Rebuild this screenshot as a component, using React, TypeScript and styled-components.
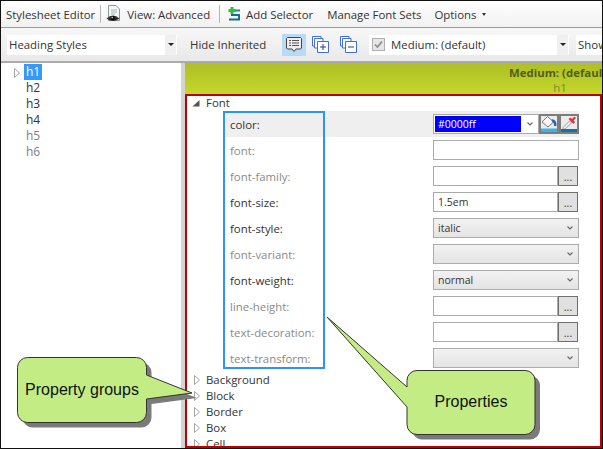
import styled, { createGlobalStyle } from 'styled-components';

const GlobalStyle = createGlobalStyle`
  html, body {
    margin: 0;
    padding: 0;
    background: #fff;
  }
`;

const Root = styled.div`
  position: relative;
  box-sizing: border-box;
  width: 603px;
  height: 449px;
  border: 1px solid #111;
  display: flex;
  flex-direction: column;
  overflow: hidden;
  font-family: 'Open Sans', 'Noto Sans', sans-serif;
  font-size: 11.4px;
  color: #333;
  background: #fff;
`;

const TopBar = styled.div`
  flex: none;
  box-sizing: border-box;
  height: 27px;
  display: flex;
  align-items: center;
  padding-left: 5px;
  white-space: nowrap;
  background: linear-gradient(#fff, #f1f1f1);
  border-bottom: 1px solid #9c9c9c;
`;

const Separator = styled.div<{ $before: number; $after: number }>`
  width: 1px;
  height: 18px;
  background: #b5b5b5;
  margin: 0 ${p => p.$after}px 0 ${p => p.$before}px;
`;

const ToolLabel = styled.span<{ $left?: number }>`
  margin-left: ${p => p.$left ?? 0}px;
`;

const Caret = styled.span`
  width: 0;
  height: 0;
  margin-left: 6px;
  border: 2.5px solid transparent;
  border-top: 3px solid #333;
  border-bottom: 0;
`;

const FilterBar = styled.div`
  flex: none;
  box-sizing: border-box;
  height: 35px;
  display: flex;
  align-items: center;
  padding-left: 6px;
  white-space: nowrap;
  background: linear-gradient(#f7f7f7, #e9e9e9);
  border-bottom: 2px solid #ababab;
`;

const Combo = styled.div<{ $width: number; $left?: number }>`
  box-sizing: border-box;
  width: ${p => p.$width}px;
  height: 20px;
  margin-left: ${p => p.$left ?? 0}px;
  display: flex;
  align-items: center;
  padding-left: 2px;
  flex: none;
  background: #fff;
`;

const ComboText = styled.span`
  flex: 1;
`;

const ComboArrow = styled.span`
  align-self: stretch;
  width: 11px;
  margin-right: 1px;
  display: flex;
  align-items: center;
  justify-content: center;
  background: #f0f0f0;

  &::before {
    content: '';
    border: 3px solid transparent;
    border-top: 3px solid #222;
    border-bottom: 0;
  }
`;

const CheckBox = styled.span`
  box-sizing: border-box;
  width: 13px;
  height: 13px;
  margin: 0 6px 0 1px;
  border: 1px solid #b0b0b0;
  background: #e6e6e6;
  display: flex;
  align-items: center;
  justify-content: center;
`;

const IconToggle = styled.div<{ $active?: boolean; $left: number }>`
  flex: none;
  width: 24px;
  height: 22px;
  margin-left: ${p => p.$left}px;
  display: flex;
  align-items: center;
  justify-content: center;
  background: ${p => (p.$active ? '#b9d9f6' : 'transparent')};
`;

const Body = styled.div`
  flex: 1;
  min-height: 0;
  display: flex;
`;

const Tree = styled.div`
  flex: none;
  width: 180px;
  padding-top: 1px;
`;

const TreeRow = styled.div<{ $muted?: boolean }>`
  height: 16px;
  display: flex;
  align-items: center;
  padding-left: 23px;
  line-height: 16px;
  font-size: 12px;
  color: ${p => (p.$muted ? '#808080' : '#333')};
  position: relative;
`;

const TreeCaret = styled.span`
  position: absolute;
  left: 13px;
  top: 4px;
  display: flex;
`;

const TreeLabel = styled.span<{ $selected?: boolean }>`
  padding: 0 2px;
  color: ${p => (p.$selected ? '#fff' : 'inherit')};
  background: ${p => (p.$selected ? '#3399ff' : 'transparent')};
`;

const Splitter = styled.div`
  flex: none;
  width: 4px;
  background: #d3d3d3;
`;

const Panel = styled.div`
  flex: 1;
  min-width: 0;
  display: flex;
  flex-direction: column;
  overflow: hidden;
`;

const Band = styled.div`
  flex: none;
  box-sizing: border-box;
  width: 750px;
  height: 32px;
  padding-top: 2px;
  display: flex;
  flex-direction: column;
  align-items: center;
  line-height: 15px;
  color: #7c8a2a;
  background: linear-gradient(#aebe26, #c4d92b);
`;

const BandTitle = styled.div`
  font-weight: 700;
  color: #535f17;
`;

const GroupRow = styled.div`
  flex: none;
  height: 16px;
  display: flex;
  align-items: center;
  padding-left: 7px;
  gap: 6px;
  line-height: 16px;
`;

const GroupCaret = styled.span`
  display: flex;
  width: 8px;
  justify-content: flex-end;
`;

const PropList = styled.div`
  flex: none;
  padding-left: 39px;
  padding-bottom: 1px;
`;

const PropRow = styled.div<{ $active?: boolean }>`
  width: 355px;
  height: 26px;
  display: grid;
  grid-template-columns: 209px 146px;
  align-items: center;
  background: ${p => (p.$active ? '#efefef' : 'transparent')};
`;

const PropName = styled.span<{ $set?: boolean }>`
  padding-left: 6px;
  color: ${p => (p.$set ? '#333' : '#8a8a8a')};
`;

const ValueWrap = styled.div`
  display: flex;
  height: 20px;
`;

const TextField = styled.div`
  box-sizing: border-box;
  flex: 1;
  height: 20px;
  padding-left: 4px;
  display: flex;
  align-items: center;
  font-size: 10.5px;
  background: #fff;
  border: 1px solid #ababab;
`;

const EllipsisButton = styled.div`
  box-sizing: border-box;
  flex: none;
  width: 20px;
  height: 20px;
  margin-right: 1px;
  padding-top: 3px;
  text-align: center;
  font-size: 10.5px;
  line-height: 14px;
  background: #e0e0e0;
  border: 1px solid #6f6f6f;
`;

const SelectField = styled.div`
  box-sizing: border-box;
  flex: 1;
  height: 20px;
  padding: 0 5px 0 4px;
  display: flex;
  align-items: center;
  justify-content: space-between;
  font-size: 10.5px;
  background: linear-gradient(#f2f2f2, #e4e4e4);
  border: 1px solid #acacac;
`;

const ColorCombo = styled.div`
  box-sizing: border-box;
  flex: 1;
  height: 20px;
  padding: 1px 5px 1px 1px;
  display: flex;
  align-items: center;
  justify-content: space-between;
  background: #fff;
  border: 1px solid #ababab;
`;

const ColorValue = styled.span`
  width: 86px;
  height: 16px;
  padding-left: 3px;
  box-sizing: border-box;
  line-height: 16px;
  font-size: 10.5px;
  color: #fff;
  background: #0000ff;
`;

const ColorButton = styled.div`
  box-sizing: border-box;
  flex: none;
  width: 20px;
  height: 20px;
  display: flex;
  background: #ececec;
  border: 2px solid #7d7d7d;
`;

const RedFrame = styled.div`
  position: absolute;
  left: 184px;
  top: 93px;
  right: 0;
  bottom: 0;
  border: 2px solid #c00000;
  pointer-events: none;
`;

const BlueFrame = styled.div`
  position: absolute;
  left: 222px;
  top: 110px;
  width: 102px;
  height: 258px;
  box-sizing: border-box;
  border: 2px solid #2a95f5;
  pointer-events: none;
`;

const Callout = styled.div<{ $left: number; $top: number; $w: number; $h: number }>`
  position: absolute;
  left: ${p => p.$left}px;
  top: ${p => p.$top}px;
  width: ${p => p.$w}px;
  height: ${p => p.$h}px;

  svg {
    position: absolute;
    inset: 0;
  }
`;

const CalloutText = styled.div<{ $left: number; $top: number; $w: number; $h: number }>`
  position: absolute;
  left: ${p => p.$left}px;
  top: ${p => p.$top}px;
  width: ${p => p.$w}px;
  height: ${p => p.$h}px;
  display: flex;
  align-items: center;
  justify-content: center;
  font-family: 'Liberation Sans', Arial, sans-serif;
  font-size: 16px;
  color: #111;
`;

const OpenCaret = () => (
  <svg width="8" height="7" viewBox="0 0 8 7">
    <path d="M7.5 0V6.5H0.5Z" fill="#555" />
  </svg>
);

const ClosedCaret = () => (
  <svg width="6" height="10" viewBox="0 0 6 10">
    <path d="M0.5 0.5L5.5 5L0.5 9.5Z" fill="#fff" stroke="#a6a6a6" />
  </svg>
);

const Chevron = () => (
  <svg width="6" height="4" viewBox="0 0 6 4">
    <path d="M0.5 0.5L3 3L5.5 0.5" fill="none" stroke="#666" strokeWidth="1.1" />
  </svg>
);

const ViewIcon = () => (
  <svg width="15" height="20" viewBox="0 0 15 20">
    <path d="M2.5 1.5H10L13.5 5V16.5H2.5Z" fill="#f4f6f6" stroke="#8d9699" />
    <path d="M5 6H11M5 8H11M5 10H9" stroke="#a8b2b5" />
    <path d="M0.5 14.5Q7 8.5 13.5 14.5Q7 19.5 0.5 14.5Z" fill="#333" />
    <circle cx="7" cy="14.3" r="2.2" fill="#111" />
    <circle cx="6.2" cy="13.5" r="0.8" fill="#ddd" />
  </svg>
);

const AddSelectorIcon = () => (
  <svg width="15" height="16" viewBox="0 0 15 16">
    <path d="M5 4.5H13" stroke="#1b87a8" strokeWidth="2" />
    <path d="M4 9H12V13.5H2" fill="none" stroke="#146f92" strokeWidth="2" />
    <path d="M5 1V8M1.5 4.5H8.5" stroke="#2fbf3a" strokeWidth="3" />
  </svg>
);

const CommentIcon = () => (
  <svg width="18" height="17" viewBox="0 0 18 17">
    <path d="M2.5 1.5H15.5L16.5 2.5V12L15.5 13H11L9 15.5L7 13H2.5L1.5 12V2.5Z" fill="#eeeeee" stroke="#444" />
    <path d="M4 4.5H14M4 7H14M4 9.5H14" stroke="#555" strokeDasharray="2 1 8" />
  </svg>
);

const PagesIcon = ({ minus }: { minus?: boolean }) => (
  <svg width="18" height="18" viewBox="0 0 18 18">
    <path d="M0.5 0.5H9V10H0.5Z" fill="#fff" stroke="#3f6fe0" />
    <path d="M2.5 2.5H11V12H2.5Z" fill="#fff" stroke="#3f6fe0" />
    <path d="M5.5 5.5H16.5V16.5H5.5Z" fill="#fff" stroke="#3f6fe0" />
    <path d={minus ? 'M8 11H14' : 'M8 11H14M11 8V14'} stroke="#24408f" />
  </svg>
);

const BucketIcon = () => (
  <svg width="16" height="16" viewBox="0 0 16 16">
    <path d="M6.5 0.5L12.5 6L7 11L1 6Z" fill="#fafafa" stroke="#777" />
    <path d="M10.5 3Q16 3.5 15.5 10L13 10Q13.5 7 11.5 6Z" fill="#2a62b8" />
    <path d="M0 12.5H16V16H0Z" fill="#39b3ea" />
  </svg>
);

const DropperIcon = () => (
  <svg width="16" height="16" viewBox="0 0 16 16">
    <path d="M2 11.5L8.5 5L10.5 7L4 13H2Z" fill="#e9eef2" stroke="#9aa4ad" />
    <path d="M7.5 3L12.5 8L14 6L12.5 4.5L15 2L13.5 0.5L11 3L9.5 1.5Z" fill="#e2303c" />
    <path d="M0 13H16V16H0Z" fill="#0f76a4" />
  </svg>
);

const CheckMark = () => (
  <svg width="9" height="9" viewBox="0 0 9 9">
    <path d="M1 4.5L3.5 7L8 1.5" fill="none" stroke="#8a8a8a" strokeWidth="1.6" />
  </svg>
);

type PropKind = 'color' | 'text' | 'more' | 'select';

interface PropItem {
  name: string;
  kind: PropKind;
  value?: string;
  set?: boolean;
}

const props: PropItem[] = [
  { name: 'color:', kind: 'color', value: '#0000ff', set: true },
  { name: 'font:', kind: 'text' },
  { name: 'font-family:', kind: 'more' },
  { name: 'font-size:', kind: 'more', value: '1.5em', set: true },
  { name: 'font-style:', kind: 'select', value: 'italic', set: true },
  { name: 'font-variant:', kind: 'select' },
  { name: 'font-weight:', kind: 'select', value: 'normal', set: true },
  { name: 'line-height:', kind: 'more' },
  { name: 'text-decoration:', kind: 'more' },
  { name: 'text-transform:', kind: 'select' },
];

const headings = ['h1', 'h2', 'h3', 'h4', 'h5', 'h6'];
const groups = ['Background', 'Block', 'Border', 'Box', 'Cell'];

function PropValue({ item }: { item: PropItem }) {
  if (item.kind === 'color') {
    return (
      <ValueWrap>
        <ColorCombo>
          <ColorValue>{item.value}</ColorValue>
          <Chevron />
        </ColorCombo>
        <ColorButton><BucketIcon /></ColorButton>
        <ColorButton><DropperIcon /></ColorButton>
      </ValueWrap>
    );
  }
  if (item.kind === 'select') {
    return (
      <ValueWrap>
        <SelectField>
          <span>{item.value}</span>
          <Chevron />
        </SelectField>
      </ValueWrap>
    );
  }
  return (
    <ValueWrap>
      <TextField>{item.value}</TextField>
      {item.kind === 'more' && <EllipsisButton>...</EllipsisButton>}
    </ValueWrap>
  );
}

function App() {
  return (
    <Root>
      <GlobalStyle />
      <TopBar>
        <ToolLabel>Stylesheet Editor</ToolLabel>
        <Separator $before={5} $after={5} />
        <ViewIcon />
        <ToolLabel $left={6}>View: Advanced</ToolLabel>
        <Separator $before={9} $after={7} />
        <AddSelectorIcon />
        <ToolLabel $left={4}>Add Selector</ToolLabel>
        <ToolLabel $left={14}>Manage Font Sets</ToolLabel>
        <ToolLabel $left={13}>Options</ToolLabel>
        <Caret />
      </TopBar>

      <FilterBar>
        <Combo $width={170}>
          <ComboText>Heading Styles</ComboText>
          <ComboArrow />
        </Combo>
        <ToolLabel $left={13}>Hide Inherited</ToolLabel>
        <IconToggle $active $left={16}><CommentIcon /></IconToggle>
        <IconToggle $left={3}><PagesIcon /></IconToggle>
        <IconToggle $left={4}><PagesIcon minus /></IconToggle>
        <Combo $width={200} $left={8}>
          <CheckBox><CheckMark /></CheckBox>
          <ComboText>Medium: (default)</ComboText>
          <ComboArrow />
        </Combo>
        <Combo $width={40} $left={7}>Show</Combo>
      </FilterBar>

      <Body>
        <Tree>
          {headings.map((h, i) => (
            <TreeRow key={h} $muted={i > 3}>
              {i === 0 && <TreeCaret><ClosedCaret /></TreeCaret>}
              <TreeLabel $selected={i === 0}>{h}</TreeLabel>
            </TreeRow>
          ))}
        </Tree>
        <Splitter />
        <Panel>
          <Band>
            <BandTitle>Medium: (default)</BandTitle>
            <div>h1</div>
          </Band>
          <GroupRow>
            <GroupCaret><OpenCaret /></GroupCaret>
            Font
          </GroupRow>
          <PropList>
            {props.map((item, i) => (
              <PropRow key={item.name} $active={i === 0}>
                <PropName $set={item.set}>{item.name}</PropName>
                <PropValue item={item} />
              </PropRow>
            ))}
          </PropList>
          {groups.map(g => (
            <GroupRow key={g}>
              <GroupCaret><ClosedCaret /></GroupCaret>
              {g}
            </GroupRow>
          ))}
        </Panel>
      </Body>

      <RedFrame />
      <BlueFrame />

      <Callout $left={15} $top={355} $w={184} $h={75}>
        <svg width="184" height="75" viewBox="0 0 184 75">
          <path transform="translate(5 5)" fill="#7a7a7a" d="M11.5 1.5H120.5a10 10 0 0 1 10 10V19L176 37L130.5 43V56.5a10 10 0 0 1 -10 10H11.5a10 10 0 0 1 -10 -10V11.5a10 10 0 0 1 10 -10Z" />
          <path fill="#c3ec85" stroke="#333" d="M11.5 1.5H120.5a10 10 0 0 1 10 10V19L176 37L130.5 43V56.5a10 10 0 0 1 -10 10H11.5a10 10 0 0 1 -10 -10V11.5a10 10 0 0 1 10 -10Z" />
        </svg>
        <CalloutText $left={1} $top={1} $w={130} $h={66}>Property groups</CalloutText>
      </Callout>

      <Callout $left={321} $top={311} $w={225} $h={130}>
        <svg width="225" height="130" viewBox="0 0 225 130">
          <path transform="translate(5 5)" fill="#7a7a7a" d="M95 58.5H203a10 10 0 0 1 10 10V112.5a10 10 0 0 1 -10 10H95a10 10 0 0 1 -10 -10V95L5 5L85 75V68.5a10 10 0 0 1 10 -10Z" />
          <path fill="#c3ec85" stroke="#333" d="M95 58.5H203a10 10 0 0 1 10 10V112.5a10 10 0 0 1 -10 10H95a10 10 0 0 1 -10 -10V95L5 5L85 75V68.5a10 10 0 0 1 10 -10Z" />
        </svg>
        <CalloutText $left={85} $top={58} $w={128} $h={64}>Properties</CalloutText>
      </Callout>
    </Root>
  );
}

export default App;
